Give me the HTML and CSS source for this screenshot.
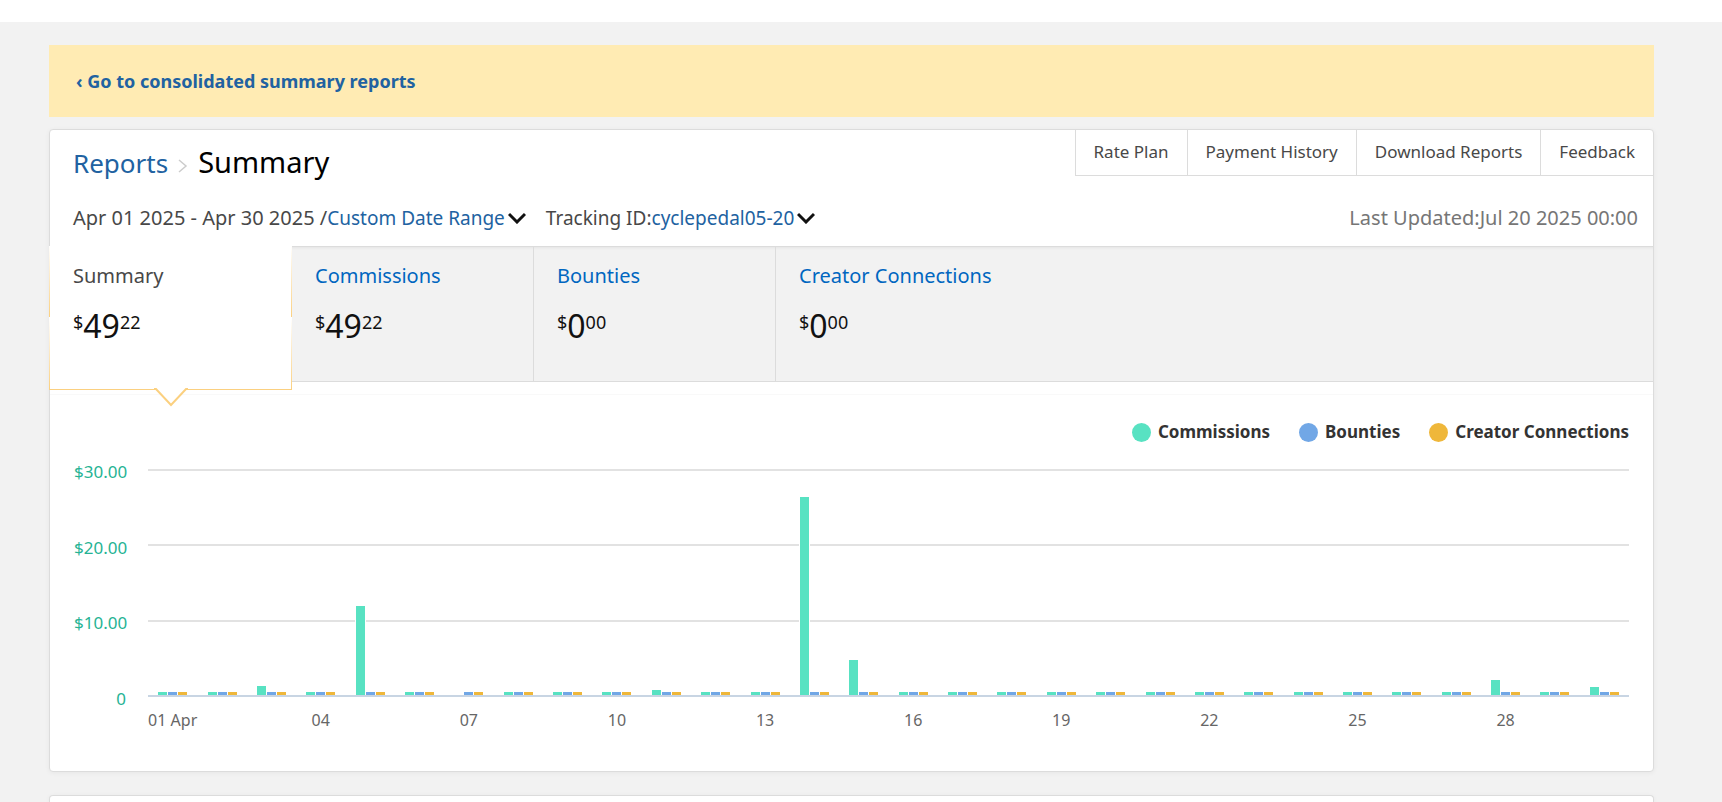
FILE: index.html
```html
<!DOCTYPE html>
<html lang="en">
    <head>
        <meta charset="UTF-8" />
        <meta name="viewport" content="width=device-width, initial-scale=1.0" />
        <title>Reports - Summary</title>
        <link rel="stylesheet" href="styles.css">
    </head>

    <body>
        <header class="topbar"></header>
        <main class="page">
            <div class="banner">
                <a href="#">‹ Go to consolidated summary reports</a>
            </div>

            <section class="card">
                <div class="card-head">
                    <h1 class="breadcrumb">
                        <a href="#">Reports</a>
                        <svg class="crumb-arrow" width="10" height="14" viewBox="0 0 10 14">
                            <path d="M1 1 L8 7 L1 13" />
                        </svg>
                        <span>Summary</span>
                    </h1>
                    <nav class="links">
                        <a href="#">Rate Plan</a>
                        <a href="#">Payment History</a>
                        <a href="#">Download Reports</a>
                        <a href="#">Feedback</a>
                    </nav>
                </div>

                <div class="filters">
                    <div class="filter">
                        <span class="dates">Apr 01 2025 - Apr 30 2025 /</span>
                        <button type="button">
                            Custom Date Range
                            <svg class="caret" width="18" height="12" viewBox="0 0 18 12">
                                <path d="M1 2 L9 10 L17 2" />
                            </svg>
                        </button>
                    </div>
                    <div class="filter">
                        <span>Tracking ID:</span>
                        <button type="button">
                            cyclepedal05-20
                            <svg class="caret" width="18" height="12" viewBox="0 0 18 12">
                                <path d="M1 2 L9 10 L17 2" />
                            </svg>
                        </button>
                    </div>
                    <div class="updated">Last Updated:Jul 20 2025 00:00</div>
                </div>

                <div class="tabs">
                    <button type="button" class="tab active">
                        <span class="tab-name">Summary</span>
                        <span class="price"><small>$</small>49<small>22</small></span>
                        <svg class="pointer" width="34" height="19" viewBox="0 0 34 19">
                            <path d="M0 1 H2 L17 17 L32 1 H34" />
                        </svg>
                    </button>
                    <button type="button" class="tab">
                        <span class="tab-name">Commissions</span>
                        <span class="price"><small>$</small>49<small>22</small></span>
                    </button>
                    <button type="button" class="tab">
                        <span class="tab-name">Bounties</span>
                        <span class="price"><small>$</small>0<small>00</small></span>
                    </button>
                    <button type="button" class="tab">
                        <span class="tab-name">Creator Connections</span>
                        <span class="price"><small>$</small>0<small>00</small></span>
                    </button>
                </div>

                <div class="chart">
                    <ul class="legend">
                        <li><i class="dot commissions"></i>Commissions</li>
                        <li><i class="dot bounties"></i>Bounties</li>
                        <li><i class="dot creator"></i>Creator Connections</li>
                    </ul>
                    <div class="chart-body">
                        <div class="y-axis">
                            <span>$30.00</span>
                            <span>$20.00</span>
                            <span>$10.00</span>
                            <span>0</span>
                        </div>
                        <div class="plot">
                            <div class="lines">
                                <i></i>
                                <i></i>
                                <i></i>
                                <i></i>
                            </div>
                            <div class="bars" id="bars"></div>
                        </div>
                        <div class="x-axis" id="days"></div>
                    </div>
                </div>
            </section>

            <section class="card next"></section>
        </main>

        <script src="chart.js"></script>
    </body>
</html>
```
FILE: styles.css
```css
* {
    margin: 0;
    padding: 0;
    box-sizing: border-box;
}

body {
    display: flex;
    flex-direction: column;
    min-height: 100vh;
    background: #f2f2f2;
    color: #484848;
    font-family: 'Noto Sans', 'Open Sans', sans-serif;
    font-size: 19px;
    line-height: 28px;
}

a {
    color: #2162a1;
    text-decoration: none;
}

button {
    border: none;
    background: none;
    font: inherit;
    color: inherit;
    text-align: left;
    cursor: pointer;
}

.topbar {
    height: 22px;
    background: #fff;
}

.page {
    flex: 1;
    display: flex;
    flex-direction: column;
    padding: 23px 68px 0 49px;
}

.banner {
    padding: 22px 27px;
    margin-bottom: 12px;
    background: #ffebb3;
    font-size: 18px;
    font-weight: bold;
}

.card {
    border: 1px solid #dcdcdc;
    border-radius: 4px;
    background: #fff;
    box-shadow: 0 1px 5px rgba(0, 0, 0, 0.05);
}

.card.next {
    flex: 1;
    margin-top: 23px;
    border-bottom: none;
    border-radius: 4px 4px 0 0;
}

/* title row */
.card-head {
    display: flex;
    justify-content: space-between;
    align-items: flex-start;
    padding-left: 23px;
}

.breadcrumb {
    display: flex;
    align-items: baseline;
    gap: 10px;
    padding: 12px 0 21px;
    font-size: 29px;
    font-weight: normal;
    line-height: 40px;
    color: #000;
}

.breadcrumb a {
    font-size: 26px;
}

.crumb-arrow {
    fill: none;
    stroke: #ccc;
    stroke-width: 1.5;
}

.links {
    display: flex;
    border-left: 1px solid #dcdcdc;
    border-bottom: 1px solid #dcdcdc;
    font-size: 17px;
    line-height: 43px;
}

.links a {
    padding: 0 18px 2px;
    color: #484848;
}

.links a + a {
    border-left: 1px solid #dcdcdc;
}

/* filters */
.filters {
    display: flex;
    gap: 20px;
    padding: 0 15px 14px 23px;
}

.filter,
.filter button {
    display: flex;
    align-items: center;
}

.filter button {
    gap: 3px;
    color: #2162a1;
}

.caret {
    fill: none;
    stroke: #111;
    stroke-width: 3;
}

.dates,
.updated {
    font-size: 20px;
}

.updated {
    margin-left: auto;
    color: #767676;
}

/* tabs */
.tabs {
    display: flex;
    align-items: flex-start;
    border-top: 1px solid #dcdcdc;
    border-bottom: 1px solid #dcdcdc;
    background: #f2f2f2;
    box-shadow: inset 0 3px 3px -2px rgba(0, 0, 0, 0.06);
}

.tab {
    width: 242px;
    padding: 15px 23px 35px;
    border-right: 1px solid #dcdcdc;
}

.tab:last-child {
    border-right: none;
}

.tab.active {
    position: relative;
    width: 243px;
    margin: -1px 0 -10px -1px;
    padding: 16px 23px 43px;
    border: 1px solid #fbd07f;
    border-top: none;
    border-image: linear-gradient(#fff, #fbd07f 50%, #fff 50%, #fbd07f) 1;
    background: #fff;
}

.tab-name {
    display: block;
    margin-bottom: 16px;
    font-size: 20px;
    color: #0066c0;
    white-space: nowrap;
}

.tab.active .tab-name {
    color: #484848;
}

.price {
    display: flex;
    font-size: 32px;
    line-height: 40px;
    color: #111;
}

.price small {
    font-size: 18px;
    line-height: 32px;
}

.pointer {
    position: absolute;
    top: 100%;
    left: 50%;
    margin-left: -17px;
    margin-top: -1px;
    fill: #fff;
    stroke: #fbd07f;
    stroke-width: 2;
}

/* chart */
.chart {
    margin-top: 12px;
    padding: 25px 24px 39px;
    border-top: 1px solid #f9f9f9;
}

.legend {
    display: flex;
    justify-content: flex-end;
    gap: 29px;
    margin-bottom: 25px;
    list-style: none;
    font-size: 17px;
    font-weight: bold;
    line-height: 24px;
    color: #333;
}

.legend li {
    display: flex;
    align-items: center;
    gap: 7px;
}

.dot {
    width: 19px;
    height: 19px;
    border-radius: 50%;
}

.commissions {
    background: #58e2c2;
}

.bounties {
    background: #71a7e6;
}

.creator {
    background: #efb73a;
}

.chart-body {
    display: grid;
    grid-template-columns: 52px 1fr;
    column-gap: 22px;
}

.y-axis {
    display: flex;
    flex-direction: column;
    justify-content: space-between;
    margin: -7px 0 -12px;
    font-size: 17px;
    line-height: 20px;
    text-align: right;
    color: #26b394;
}

.plot {
    display: grid;
    height: 228px;
}

.lines,
.bars {
    grid-area: 1 / 1;
}

.lines {
    display: flex;
    flex-direction: column;
    justify-content: space-between;
}

.lines i {
    height: 2px;
    background: #e2e2e2;
}

.lines i:last-child {
    background: #c8d5e3;
}

.bars,
.x-axis {
    display: grid;
    grid-template-columns: repeat(30, 1fr);
}

.bars {
    padding-bottom: 2px;
}

.day {
    display: flex;
    justify-content: center;
    align-items: flex-end;
    gap: 1px;
}

.bar {
    width: 9px;
    min-height: 3px;
    box-shadow: 1px 0 #fff, -1px 0 #fff;
}

.bar.empty {
    visibility: hidden;
}

.x-axis {
    grid-column: 2;
    margin-top: 11px;
    font-size: 16px;
    line-height: 24px;
    color: #666;
}

.x-axis span {
    display: flex;
    justify-content: center;
    white-space: nowrap;
    width: 0;
    min-width: 100%;
}
```
FILE: chart.js
```js
const MAX = 30;
const DAYS = 30;
// commissions per day, days without sales keep the minimum bar
const commissions = { 3: 1.2, 5: 11.8, 11: 0.6, 14: 26.3, 15: 4.6, 28: 2, 30: 1.05 };
const noBar = [7];

const $bars = document.getElementById('bars');
const $days = document.getElementById('days');

function addBar($day, name, value) {
    const $bar = document.createElement('div');
    $bar.className = `bar ${name}`;
    $bar.style.height = `${(value / MAX) * 100}%`;
    $day.appendChild($bar);
    return $bar;
}

for (let i = 1; i <= DAYS; i++) {
    const $day = document.createElement('div');
    $day.className = 'day';
    const $bar = addBar($day, 'commissions', commissions[i] || 0);
    if (noBar.includes(i)) $bar.classList.add('empty');
    addBar($day, 'bounties', 0);
    addBar($day, 'creator', 0);
    $bars.appendChild($day);

    const $label = document.createElement('span');
    if (i % 3 === 1) {
        $label.textContent = String(i).padStart(2, '0') + (i === 1 ? ' Apr' : '');
    }
    $days.appendChild($label);
}
```
